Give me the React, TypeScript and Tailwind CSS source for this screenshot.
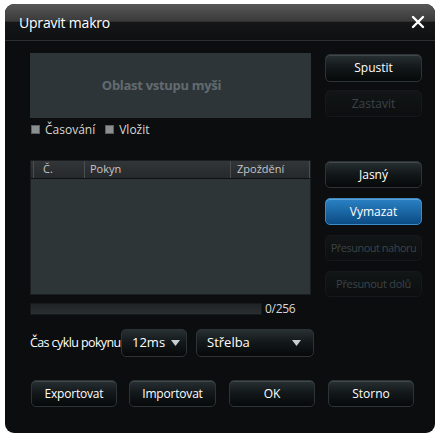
import React from 'react';

const font = { fontFamily: '"Open Sans", "DejaVu Sans", sans-serif' };

type BtnProps = { label: string; variant?: 'normal' | 'blue' | 'disabled'; className?: string };

const Btn: React.FC<BtnProps> = ({ label, variant = 'normal', className = '' }) => {
  const look =
    variant === 'blue'
      ? 'bg-gradient-to-b from-[#2a82c4] to-[#0b4c85] border-[#3a8cc8] text-white shadow-[inset_0_1px_0_rgba(255,255,255,0.25)]'
      : variant === 'disabled'
      ? 'bg-gradient-to-b from-[#121617] to-[#0c0e0f] border-[#15191b] text-[#3b4347]'
      : 'bg-gradient-to-b from-[#283033] via-[#121719] to-[#070909] border-[#2c3438] text-white shadow-[inset_0_1px_0_rgba(255,255,255,0.12)]';
  return (
    <div
      className={`flex items-center justify-center whitespace-nowrap rounded-[5px] border ${look} ${className}`}
    >
      {label}
    </div>
  );
};

const Check: React.FC<{ label: string }> = ({ label }) => (
  <div className="flex items-center gap-[5px]">
    <span className="w-[9px] h-[9px] bg-[#8c8f90] border border-[#5c6062]" />
    <span className="text-[12px] text-[#d8d8d8]">{label}</span>
  </div>
);

const Caret = () => (
  <svg width="9" height="6" viewBox="0 0 9 6">
    <path d="M0 0 H9 L4.5 6 Z" fill="#c8d0d4" />
  </svg>
);

export default function App() {
  return (
    <div className="w-[437px] h-[434px] bg-white pt-[4px] pl-[5px]" style={font}>
      <div className="w-[430px] h-[429px] rounded-[9px] bg-[#0b0d0e] overflow-hidden flex flex-col">
        {/* title bar */}
        <div className="h-[37px] shrink-0 border-b border-[#2b2f31] bg-[linear-gradient(to_bottom,#575757_0%,#3a3a3a_48%,#151617_50%,#0f1011_100%)] flex items-center justify-between pl-[14px] pr-[10px]">
          <span className="text-white text-[14px] tracking-[-0.2px]">Upravit makro</span>
          <svg width="14" height="14" viewBox="0 0 14 14">
            <path d="M2 2 L12 12 M12 2 L2 12" stroke="#ffffff" strokeWidth="2.4" strokeLinecap="round" />
          </svg>
        </div>

        <div className="pl-[25px] pr-[13px]">
          {/* top section */}
          <div className="flex mt-[12px] gap-[14px]">
            <div className="w-[281px]">
              <div className="h-[65px] bg-[#2e3538] flex items-center justify-center pr-[18px]">
                <span className="text-[13px] font-bold text-[#626b70] tracking-[-0.3px]">Oblast vstupu myši</span>
              </div>
              <div className="flex items-center gap-[10px] mt-[3px] pl-[1px] h-[17px]">
                <Check label="Časování" />
                <Check label="Vložit" />
              </div>
            </div>
            <div className="w-[97px] flex flex-col gap-[8px] pt-[1px]">
              <Btn label="Spustit" className="h-[28px] text-[12px]" />
              <Btn label="Zastavit" variant="disabled" className="h-[27px] text-[12px]" />
            </div>
          </div>

          {/* table section */}
          <div className="flex mt-[22px] gap-[14px]">
            <div className="w-[281px] h-[135px] bg-[#2d3537] border border-[#1a1e20] flex flex-col">
              <div className="h-[18px] flex bg-gradient-to-b from-[#333638] to-[#26292b] border-b border-[#111] text-[11px] text-[#c4c7c8] items-center">
                <div className="w-[52px] h-full flex items-center pl-[9px] border-l border-[#4a4e50] ml-[2px] border-r">Č.</div>
                <div className="w-[146px] h-full flex items-center pl-[5px] border-r border-[#4a4e50]">Pokyn</div>
                <div className="w-[79px] h-full flex items-center pl-[6px] border-r border-[#4a4e50]">Zpoždění</div>
              </div>
            </div>
            <div className="w-[97px] flex flex-col gap-[10px] pt-[1px]">
              <Btn label="Jasný" className="h-[27px] text-[12px]" />
              <Btn label="Vymazat" variant="blue" className="h-[27px] text-[12px]" />
              <Btn label="Přesunout nahoru" variant="disabled" className="h-[26px] text-[11px] tracking-[-0.5px]" />
              <Btn label="Přesunout dolů" variant="disabled" className="h-[26px] text-[11px] tracking-[-0.3px]" />
            </div>
          </div>

          {/* progress */}
          <div className="flex items-center mt-[6px] gap-[3px] h-[12px]">
            <div className="w-[232px] h-[12px] bg-gradient-to-b from-[#1f2325] to-[#2a2f31] border border-[#161a1b]" />
            <span className="text-[12px] text-[#d8d8d8] tracking-[-0.3px]">0/256</span>
          </div>

          {/* cycle row */}
          <div className="flex items-center mt-[14px] h-[28px]">
            <span className="text-[12.5px] text-white tracking-[-0.6px] w-[91px] whitespace-nowrap">Čas cyklu pokynu</span>
            <div className="w-[66px] h-[28px] rounded-[5px] border border-[#2c3438] bg-gradient-to-b from-[#283033] via-[#121719] to-[#070909] flex items-center pl-[10px] gap-[6px] text-[13px] text-white">
              12ms <Caret />
            </div>
            <div className="ml-[9px] w-[118px] h-[28px] rounded-[5px] border border-[#2c3438] bg-gradient-to-b from-[#283033] via-[#121719] to-[#070909] flex items-center justify-between pl-[10px] pr-[12px] text-[13px] text-white">
              Střelba <Caret />
            </div>
          </div>

          {/* bottom buttons */}
          <div className="flex mt-[23px] pl-[1px]">
            <Btn label="Exportovat" className="w-[86px] h-[27px] text-[12px] tracking-[-0.2px]" />
            <Btn label="Importovat" className="w-[87px] h-[27px] ml-[12px] text-[12px] tracking-[-0.2px]" />
            <Btn label="OK" className="w-[86px] h-[27px] ml-[13px] text-[12px]" />
            <Btn label="Storno" className="w-[86px] h-[27px] ml-[13px] text-[12px]" />
          </div>
        </div>
      </div>
    </div>
  );
}
